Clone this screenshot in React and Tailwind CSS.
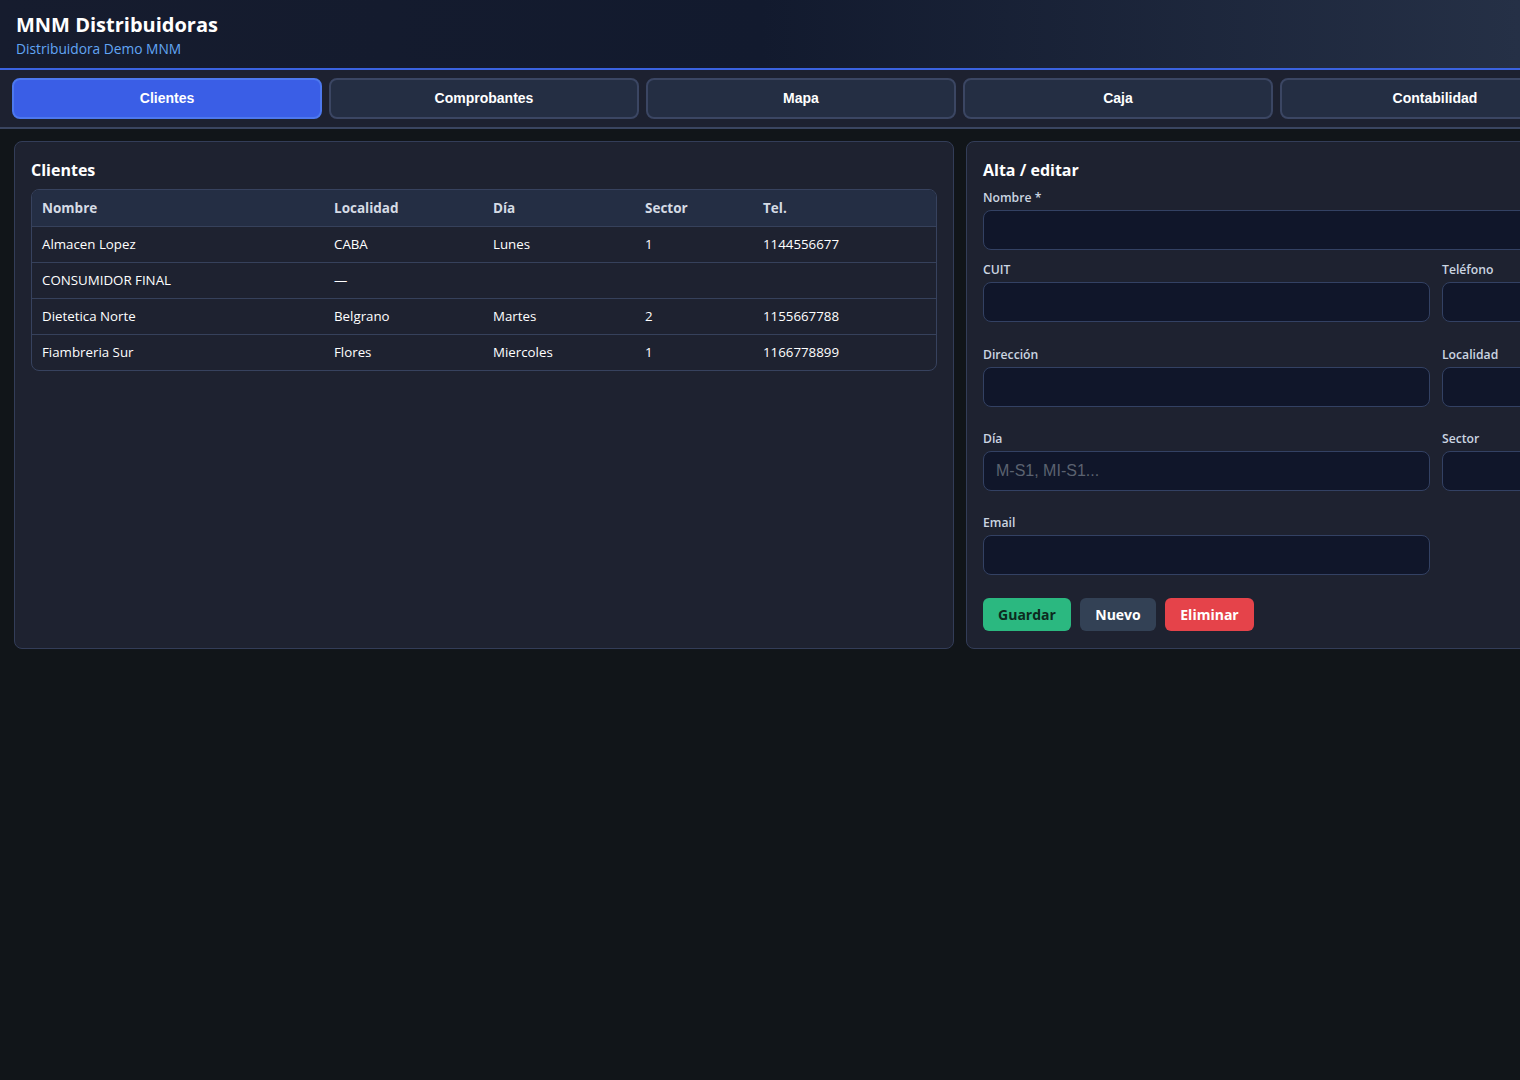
import React from "react";

const seg = { fontFamily: '"Segoe UI", "Open Sans", "Noto Sans", sans-serif' };

const tabs = ["Clientes", "Comprobantes", "Mapa", "Caja", "Contabilidad"];

const rows = [
  ["Almacen Lopez", "CABA", "Lunes", "1", "1144556677"],
  ["CONSUMIDOR FINAL", "—", "", "", ""],
  ["Dietetica Norte", "Belgrano", "Martes", "2", "1155667788"],
  ["Fiambreria Sur", "Flores", "Miercoles", "1", "1166778899"],
];

function Field({ label, placeholder, mb }) {
  return (
    <div className={mb}>
      <div className="text-[12.2px] font-semibold text-[#cbd5e1] leading-[16px] mb-[4px]">{label}</div>
      <input
        placeholder={placeholder}
        className="block w-full h-[40px] rounded-[8px] border border-[#334163] bg-[#10162a] px-3 text-[16px] text-white placeholder:text-[#5b6270] outline-none"
        style={{ fontFamily: '"Liberation Sans", Arial, sans-serif' }}
      />
    </div>
  );
}

export default function App() {
  return (
    <div className="min-h-screen w-full overflow-hidden bg-[#111519]" style={seg}>
      <header className="h-[70px] border-b-2 border-[#3b63e0] bg-gradient-to-r from-[#161c2e] via-[#121a2e] to-[#253046] px-4 pt-[11px]">
        <div className="text-[20px] font-bold text-white leading-[28px]">MNM Distribuidoras</div>
        <div className="text-[13.75px] text-[#62a6f5] leading-[20px]">Distribuidora Demo MNM</div>
      </header>
      <nav className="h-[59px] border-b-2 border-[#3a4560] bg-[#1d2130] px-3 pt-[8px] flex gap-[7px]">
        {tabs.map((t, i) => (
          <button
            key={t}
            className={
              "shrink-0 w-[310px] h-[41px] rounded-[8px] border-2 text-[14px] font-bold text-white " +
              (i === 0 ? "bg-[#3a5ee6] border-[#4d78ee]" : "bg-[#242e43] border-[#3b4663]")
            }
            style={{ fontFamily: '"Liberation Sans", Arial, sans-serif' }}
          >
            {t}
          </button>
        ))}
      </nav>
      <main className="flex gap-[12px] px-[14px] pt-[12px]">
        <section className="shrink-0 w-[940px] h-[508px] rounded-[8px] border border-[#333d58] bg-[#1e2230] px-[16px] pt-[16px]">
          <h2 className="text-[16px] font-bold text-white leading-[24px] mb-[7px]">Clientes</h2>
          <div className="rounded-[8px] border border-[#37425e] overflow-hidden">
            <table className="w-full text-[13.3px] text-white border-collapse">
              <thead>
                <tr className="bg-[#242e44] text-[#d5dbe5] text-left">
                  <th className="h-[36px] pl-[10px] w-[302px] font-bold text-[13.5px]">Nombre</th>
                  <th className="w-[159px] font-bold text-[13.5px]">Localidad</th>
                  <th className="w-[152px] font-bold text-[13.5px]">Día</th>
                  <th className="w-[118px] font-bold text-[13.5px]">Sector</th>
                  <th className="font-bold text-[13.5px]">Tel.</th>
                </tr>
              </thead>
              <tbody>
                {rows.map((r) => (
                  <tr key={r[0]} className="border-t border-[#36415b]">
                    <td className="h-[36px] pl-[10px] pt-[2px]">{r[0]}</td>
                    <td className="pt-[2px]">{r[1]}</td>
                    <td className="pt-[2px]">{r[2]}</td>
                    <td className="pt-[2px]">{r[3]}</td>
                    <td className="pt-[2px]">{r[4]}</td>
                  </tr>
                ))}
              </tbody>
            </table>
          </div>
        </section>
        <section className="shrink-0 w-[940px] h-[508px] rounded-[8px] border border-[#333d58] bg-[#1e2230] px-[16px] pt-[16px]">
          <h2 className="text-[16px] font-bold text-white leading-[24px] mb-[8px]">Alta / editar</h2>
          <Field label="Nombre *" mb="mb-[12px]" />
          <div className="grid grid-cols-2 gap-x-[12px]">
            <Field label="CUIT" mb="mb-[25px]" />
            <Field label="Teléfono" mb="mb-[25px]" />
            <Field label="Dirección" mb="mb-[24px]" />
            <Field label="Localidad" mb="mb-[24px]" />
            <Field label="Día" placeholder="M-S1, MI-S1..." mb="mb-[24px]" />
            <Field label="Sector" mb="mb-[24px]" />
            <Field label="Email" mb="mb-[23px]" />
          </div>
          <div className="flex gap-[9px]">
            <button className="h-[33px] w-[88px] rounded-[6px] bg-[#2bb880] text-[#0d2a1e] text-[14px] font-bold">Guardar</button>
            <button className="h-[33px] w-[76px] rounded-[6px] bg-[#334155] text-white text-[14px] font-bold">Nuevo</button>
            <button className="h-[33px] w-[89px] rounded-[6px] bg-[#e5434a] text-white text-[14px] font-bold">Eliminar</button>
          </div>
        </section>
      </main>
    </div>
  );
}
